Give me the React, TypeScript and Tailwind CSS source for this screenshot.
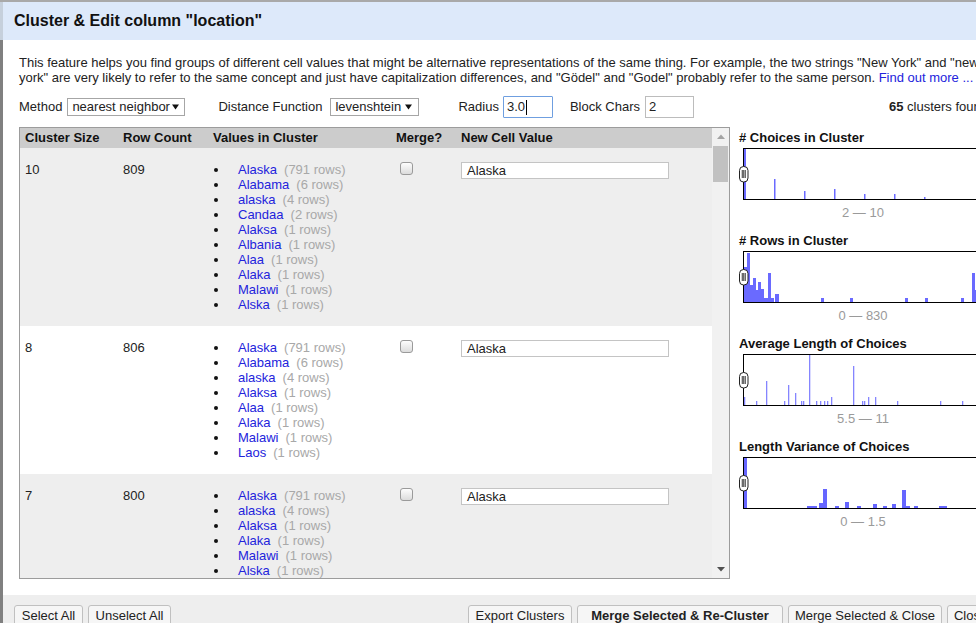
type Bar = [number, number, number];

const clusters: { size: number; rows: number; values: [string, number][] }[] = [
  {
    size: 10,
    rows: 809,
    values: [
      ["Alaska", 791],
      ["Alabama", 6],
      ["alaska", 4],
      ["Candaa", 2],
      ["Alaksa", 1],
      ["Albania", 1],
      ["Alaa", 1],
      ["Alaka", 1],
      ["Malawi", 1],
      ["Alska", 1],
    ],
  },
  {
    size: 8,
    rows: 806,
    values: [
      ["Alaska", 791],
      ["Alabama", 6],
      ["alaska", 4],
      ["Alaksa", 1],
      ["Alaa", 1],
      ["Alaka", 1],
      ["Malawi", 1],
      ["Laos", 1],
    ],
  },
  {
    size: 7,
    rows: 800,
    values: [
      ["Alaska", 791],
      ["alaska", 4],
      ["Alaksa", 1],
      ["Alaka", 1],
      ["Malawi", 1],
      ["Alska", 1],
      ["Alaa", 1],
    ],
  },
];

const choicesBars: Bar[] = [
  [0, 2, 50], [30, 1.5, 20], [60, 1.5, 8], [90, 1.5, 10], [120, 1.5, 5], [150, 1.5, 5], [180, 1.5, 2],
];

const rowsBars: Bar[] = [
  [0, 3, 35], [3, 3, 49], [6, 3, 17], [9, 3, 24], [12, 2, 12], [14, 3, 20], [17, 3, 13], [20, 4, 4],
  [24, 3, 29], [27, 3, 4], [31, 4, 8], [77, 3, 4], [106, 3, 4], [161, 3, 4], [181, 3, 4], [217, 3, 4],
  [228, 3, 29], [231, 3, 12],
];

const avgBars: Bar[] = [
  [0, 1.3, 8], [12, 1.3, 4], [22, 1.3, 24], [40, 1.3, 4], [44, 1.3, 20], [51, 1.3, 12], [57, 1.3, 4],
  [59, 1.3, 4], [65, 1.3, 50], [72, 1.3, 4], [76, 1.3, 4], [80, 1.3, 4], [83, 1.3, 4], [87, 1.3, 8],
  [109, 1.3, 39], [118, 1.3, 4], [120, 1.3, 4], [124, 1.3, 8], [131, 1.3, 8], [153, 1.3, 4],
  [196, 1.3, 4], [218, 1.3, 4],
];

const varBars: Bar[] = [
  [0, 3, 50], [63, 10, 2], [75, 4, 5], [79, 4, 19], [91, 4, 2], [101, 4, 6], [113, 4, 2], [129, 4, 4],
  [139, 4, 2], [148, 4, 4], [158, 4, 18], [162, 4, 2], [170, 4, 2], [195, 8, 2],
];

function Caret() {
  return (
    <svg width="7" height="6" viewBox="0 0 7 6" className="block shrink-0">
      <path d="M0 0.5h7L3.5 5.5z" fill="#111" />
    </svg>
  );
}

function Facet({ title, label, bars, color }: { title: string; label: string; bars: Bar[]; color: string }) {
  return (
    <div className="mb-[13px]">
      <div className="font-bold leading-[15px] text-[#111]">{title}</div>
      <div className="relative mt-[3px] ml-[4px] h-[52px] w-[240px] border border-black bg-white">
        <svg width="238" height="50" className="block">
          {bars.map(([x, w, h], i) => (
            <rect key={i} x={x} y={50 - h} width={w} height={h} fill={color} />
          ))}
        </svg>
        <svg className="absolute left-[-5px] top-[17px]" width="10" height="17" viewBox="0 0 10 17">
          <rect x="0.5" y="0.5" width="8.5" height="15.5" rx="4" fill="#fff" stroke="#222" />
          <path d="M3.25 4v8M4.75 4v8M6.25 4v8" stroke="#222" strokeWidth="0.9" />
        </svg>
      </div>
      <div className="mt-[5px] ml-[4px] w-[240px] text-center leading-[15px] text-[#9a9a9a]">{label}</div>
    </div>
  );
}

function Btn({ w, bold, children }: { w: string; bold?: boolean; children: string }) {
  return (
    <div
      className={`flex h-[22px] items-center justify-center rounded-[3px] border border-[#c0c0c0] bg-[#f6f6f6] text-[13px] text-[#222] ${w} ${
        bold ? "font-bold" : ""
      }`}
    >
      {children}
    </div>
  );
}

export default function App() {
  return (
    <div className="relative h-[623px] w-[976px] overflow-hidden bg-white font-['Liberation_Sans',Arial,sans-serif] text-[13px] text-[#222]">
      <div className="h-[2px] bg-[#a9a9a9]" />
      <div className="w-[1010px]">
        {/* title bar */}
        <div className="flex h-[38px] items-center border-l-[3px] border-[#c6d0dc] bg-[#dde9fa] pl-[11px] text-[16px] font-bold text-[#111]">
          Cluster &amp; Edit column "location"
        </div>

        <div className="border-l-[3px] border-[#808080]">
          <div className="pl-[16px] pr-[22px] pt-[15px]">
            <p className="whitespace-nowrap leading-[15px]">
              This feature helps you find groups of different cell values that might be alternative representations of
              the same thing. For example, the two strings "New York" and "new
              <br />
              york" are very likely to refer to the same concept and just have capitalization differences, and "Gödel"
              and "Godel" probably refer to the same person. <span className="text-[#2323dc]">Find out more ...</span>
            </p>

            {/* controls */}
            <div className="mt-[11px] flex h-[22px] items-center whitespace-nowrap">
              <span>Method</span>
              <div className="ml-[5px] flex h-[18px] w-[118px] items-center justify-between border border-[#a6a6a6] bg-white pl-[4px] pr-[5px]">
                <span>nearest neighbor</span>
                <Caret />
              </div>
              <span className="ml-[33px]">Distance Function</span>
              <div className="ml-[8px] flex h-[18px] w-[89px] items-center justify-between border border-[#a6a6a6] bg-white pl-[4px] pr-[6px]">
                <span>levenshtein</span>
                <Caret />
              </div>
              <span className="ml-[39px]">Radius</span>
              <div className="ml-[4px] flex h-[22px] w-[50px] items-center rounded-[1px] border border-[#6f9fe0] bg-white pl-[3px]">
                <span>3.0</span>
                <span className="ml-[1px] h-[15px] w-[1px] bg-black" />
              </div>
              <span className="ml-[17px]">Block Chars</span>
              <div className="ml-[5px] flex h-[22px] w-[49px] items-center border border-[#bcbcbc] bg-white pl-[3px]">
                2
              </div>
              <span className="ml-auto">
                <b>65</b> clusters found
              </span>
            </div>

            {/* table + facets */}
            <div className="mt-[9px] flex items-start">
              <div className="flex h-[452px] w-[711px] border border-[#9c9c9c]">
                <div className="w-[692px] overflow-hidden">
                  <div className="grid h-[20px] grid-cols-[98px_90px_183px_65px_256px] items-center bg-[#cccccc] font-bold text-[#111]">
                    <div className="pl-[5px]">Cluster Size</div>
                    <div className="pl-[5px]">Row Count</div>
                    <div className="pl-[5px]">Values in Cluster</div>
                    <div className="pl-[5px]">Merge?</div>
                    <div className="pl-[5px]">New Cell Value</div>
                  </div>
                  <div className="h-[430px] overflow-hidden">
                    {clusters.map((c, i) => (
                      <div
                        key={i}
                        className={`grid grid-cols-[98px_90px_183px_65px_256px] py-[14px] leading-[15px] ${
                          i % 2 === 0 ? "bg-[#eeeeee]" : "bg-white"
                        }`}
                      >
                        <div className="pl-[5px]">{c.size}</div>
                        <div className="pl-[5px]">{c.rows}</div>
                        <ul className="pl-[5px]">
                          {c.values.map(([v, n], j) => (
                            <li key={j} className="flex items-center whitespace-nowrap">
                              <span className="flex w-[25px] items-center">
                                <span className="ml-[1px] size-[4px] rounded-full bg-[#111]" />
                              </span>
                              <span className="text-[#2323dc]">{v}</span>
                              <span className="ml-[7px] text-[#a8a8a8]">({n} rows)</span>
                            </li>
                          ))}
                        </ul>
                        <div className="pl-[9px]">
                          <span className="block size-[13px] rounded-[3px] border border-[#9a9a9a] bg-gradient-to-b from-[#fdfdfd] to-[#dcdcdc]" />
                        </div>
                        <div className="pl-[5px]">
                          <div className="flex h-[17px] w-[208px] items-center border border-[#c4c4c4] bg-white pl-[5px]">
                            Alaska
                          </div>
                        </div>
                      </div>
                    ))}
                  </div>
                </div>
                {/* scrollbar */}
                <div className="flex w-[17px] flex-col bg-[#f1f1f1]">
                  <div className="flex h-[17px] items-center justify-center">
                    <svg width="8" height="5" viewBox="0 0 8 5">
                      <path d="M0 5L4 0.5L8 5z" fill="#a3a3a3" />
                    </svg>
                  </div>
                  <div className="mx-auto mt-[1px] h-[36px] w-[15px] bg-[#c1c1c1]" />
                  <div className="mt-auto flex h-[17px] items-center justify-center">
                    <svg width="8" height="5" viewBox="0 0 8 5">
                      <path d="M0 0L8 0L4 4.5z" fill="#505050" />
                    </svg>
                  </div>
                </div>
              </div>

              <div className="ml-[9px] pt-[3px]">
                <Facet title="# Choices in Cluster" label="2 — 10" bars={choicesBars} color="#6a6aff" />
                <Facet title="# Rows in Cluster" label="0 — 830" bars={rowsBars} color="#6a6aff" />
                <Facet title="Average Length of Choices" label="5.5 — 11" bars={avgBars} color="#8585ff" />
                <Facet title="Length Variance of Choices" label="0 — 1.5" bars={varBars} color="#6666ff" />
              </div>
            </div>
          </div>

          {/* footer */}
          <div className="mt-[16px] flex justify-between bg-[#eeeeee] pb-[10px] pl-[11px] pr-[16px] pt-[10px]">
            <div className="flex gap-[5px]">
              <Btn w="w-[69px]">Select All</Btn>
              <Btn w="w-[83px]">Unselect All</Btn>
            </div>
            <div className="flex gap-[5px]">
              <Btn w="w-[104px]">Export Clusters</Btn>
              <Btn w="w-[206px]" bold>
                Merge Selected &amp; Re-Cluster
              </Btn>
              <Btn w="w-[154px]">Merge Selected &amp; Close</Btn>
              <Btn w="w-[47px]">Close</Btn>
            </div>
          </div>
        </div>
      </div>
    </div>
  );
}
